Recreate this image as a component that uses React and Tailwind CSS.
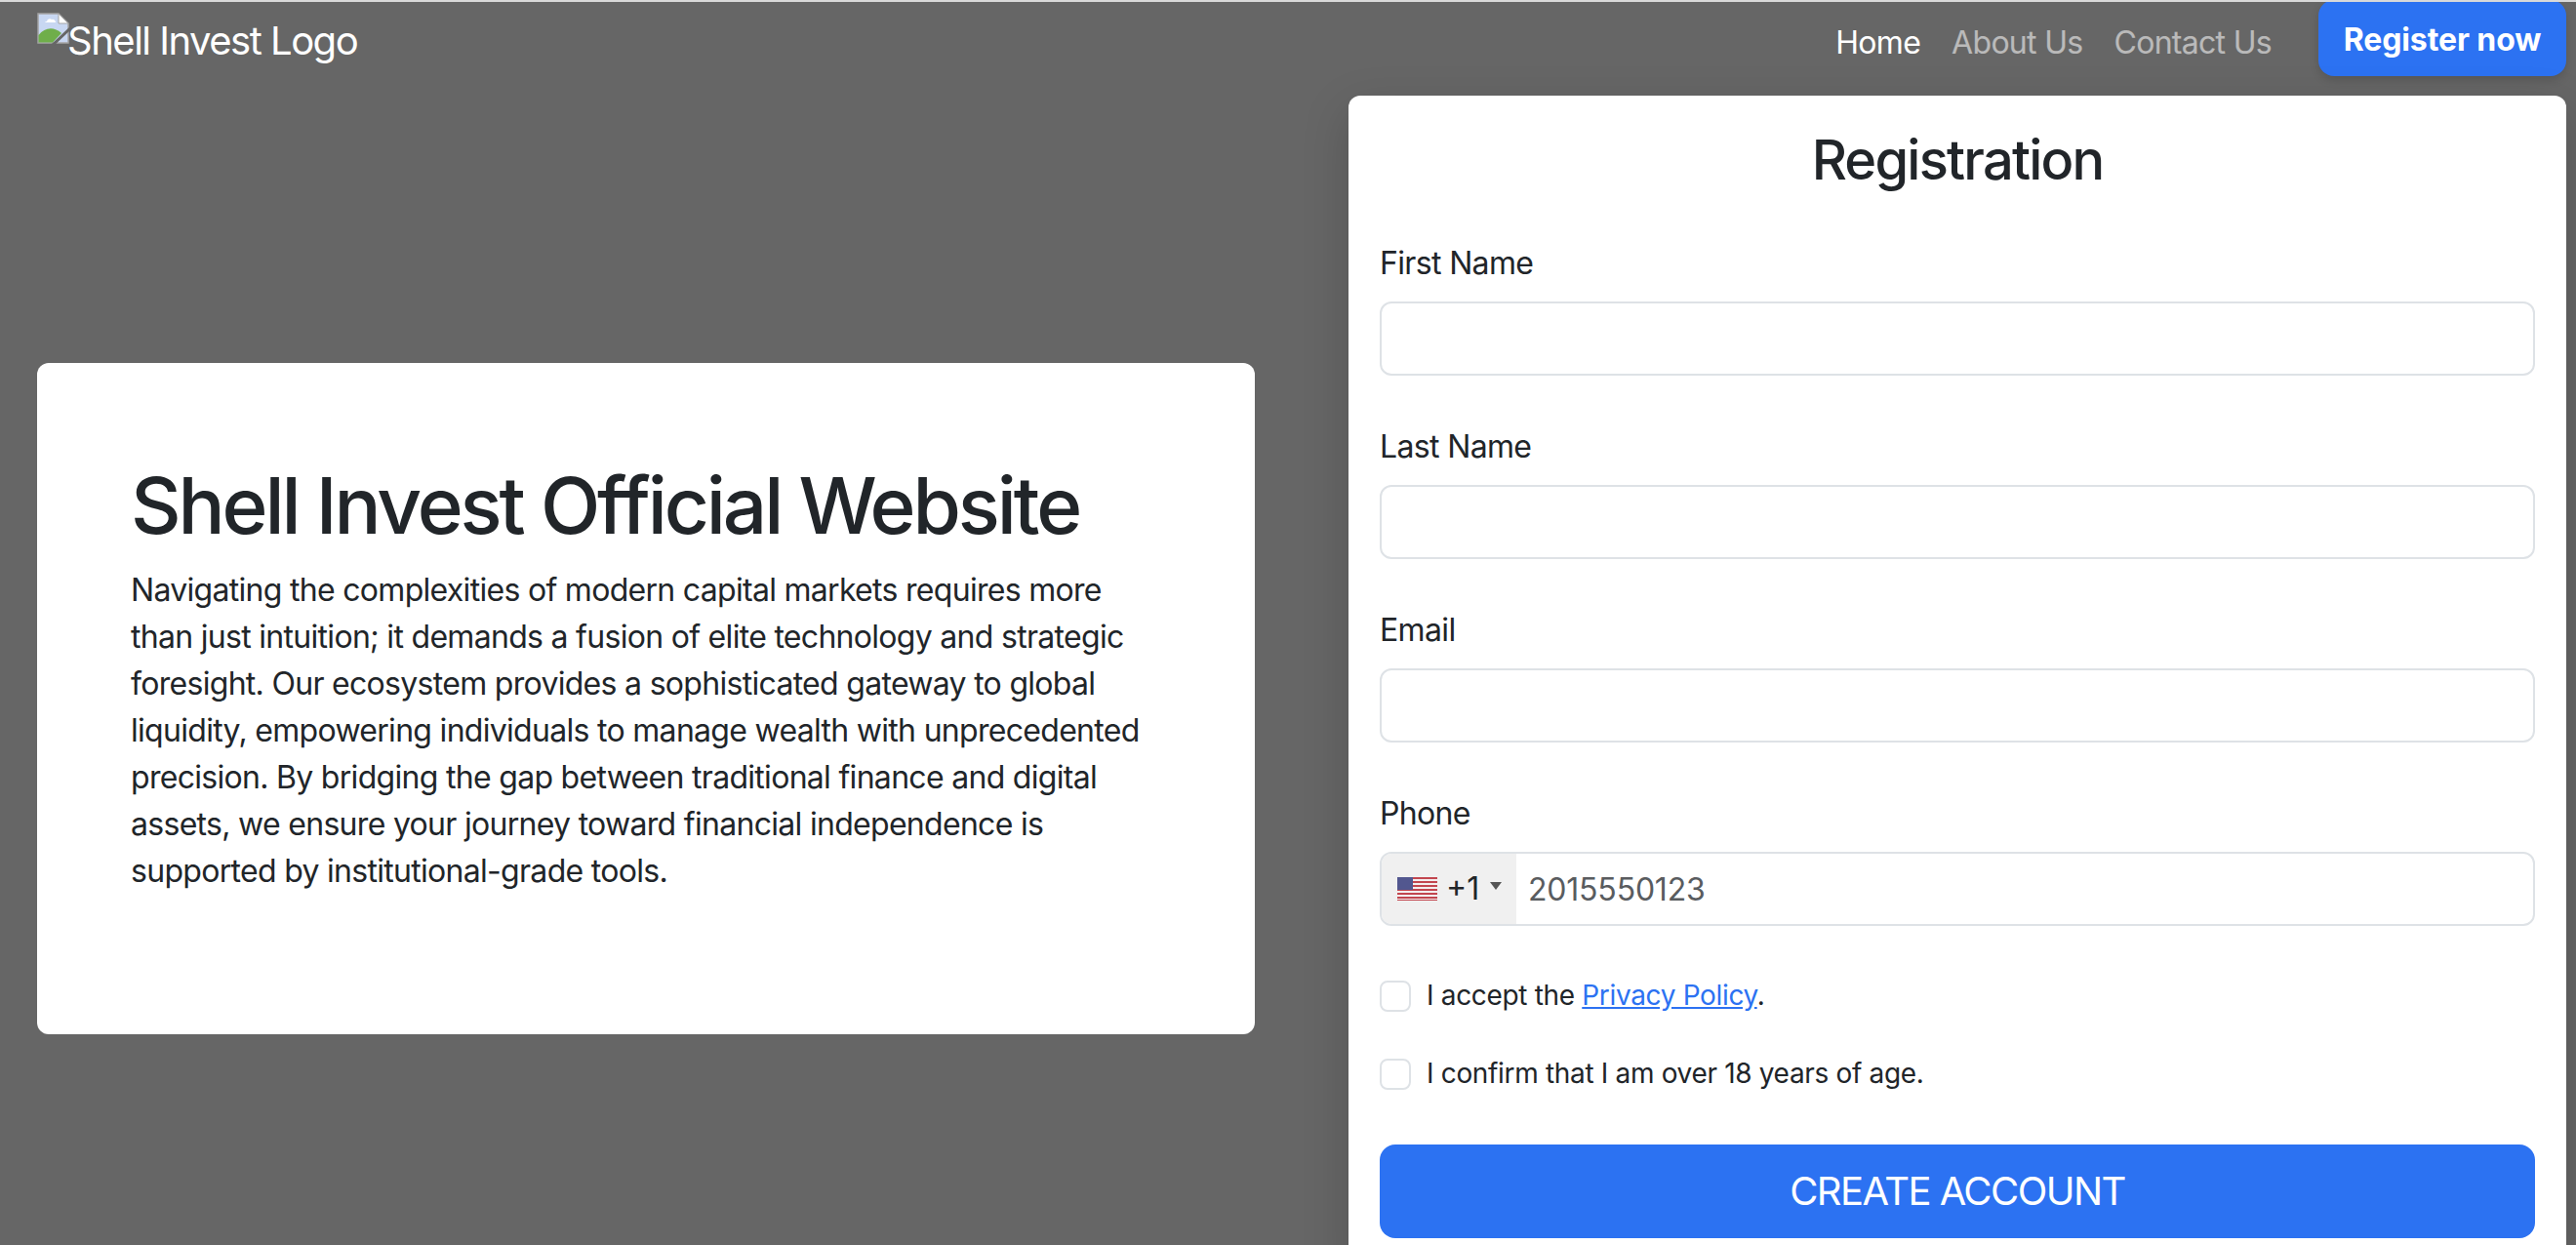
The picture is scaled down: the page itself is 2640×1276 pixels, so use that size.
export default function App() {
  const field = "block w-full h-[76px] rounded-[12px] border-2 border-[#dee2e6] bg-white";
  const labelCls = "block text-[32px] leading-[48px] mb-[15px] text-[#212529] tracking-[-0.65px]";
  return (
    <div className="h-screen overflow-hidden bg-[#666666] border-t-2 border-[#d9d9d9] font-['Inter','Liberation_Sans',sans-serif] text-[#212529]">
      <nav className="h-[96px] flex items-start justify-between pl-[38px] pr-[10px]">
        <div className="flex items-start pt-[10px]">
          <svg width="34" height="34" viewBox="0 0 34 34" className="shrink-0 mt-px">
            <path d="M1 1H22L32 11V31H1Z" fill="#c8d7f2" stroke="#a4a4a4" strokeWidth="1.5" />
            <path d="M22 1V11H32Z" fill="#fff" stroke="#a4a4a4" strokeWidth="1" />
            <path d="M10 9a3 3 0 0 1 5-2a3 3 0 0 1 4 3H8a2 2 0 0 1 2-1Z" fill="#fff" />
            <path d="M1.5 30.5V23C8 15 17 14 25 21L16 30.5Z" fill="#6fae4a" />
            <path d="M16 33L34 16" stroke="#666666" strokeWidth="3" />
          </svg>
          <span className="text-[40px] leading-[60px] text-white -ml-[3px] font-normal tracking-[-1.5px]">Shell Invest Logo</span>
        </div>
        <div className="flex items-start">
          <div className="flex text-[32px] leading-[48px] pt-[18px] mr-[48px] gap-[32px] tracking-[-0.7px]">
            <a className="text-white">Home</a>
            <a className="text-white/55">About Us</a>
            <a className="text-white/55">Contact Us</a>
          </div>
          <button className="-mt-[2px] w-[254px] h-[78px] rounded-[16px] bg-[#2c72f2] text-white text-[32px] font-bold leading-[48px] pt-[3px] tracking-[-0.1px] shadow-[0_4px_10px_rgba(0,0,0,0.15)]">Register now</button>
        </div>
      </nav>
      <main className="flex items-start pl-[38px] pr-[10px] gap-[96px]">
        <section className="w-[1248px] h-[688px] mt-[274px] bg-white rounded-[12px] pt-[98px] px-[96px]">
          <h1 className="text-[80px] leading-[96px] font-medium mb-[15px] tracking-[-3.1px]">Shell Invest Official Website</h1>
          <p className="text-[32px] leading-[48px] tracking-[-0.7px]">Navigating the complexities of modern capital markets requires more than just intuition; it demands a fusion of elite technology and strategic foresight. Our ecosystem provides a sophisticated gateway to global liquidity, empowering individuals to manage wealth with unprecedented precision. By bridging the gap between traditional finance and digital assets, we ensure your journey toward financial independence is supported by institutional-grade tools.</p>
        </section>
        <section className="w-[1248px] bg-white rounded-[12px] px-[32px] pt-[32px] pb-[32px] shadow-[0_16px_48px_rgba(0,0,0,0.18)]">
          <h2 className="text-[56px] leading-[68px] font-medium text-center mb-[48px] tracking-[-1.8px]">Registration</h2>
          <label className={labelCls}>First Name</label>
          <div className={field + " mb-[49px]"} />
          <label className={labelCls}>Last Name</label>
          <div className={field + " mb-[49px]"} />
          <label className={labelCls}>Email</label>
          <div className={field + " mb-[49px]"} />
          <label className={labelCls}>Phone</label>
          <div className={field + " flex overflow-hidden mb-[56px]"}>
            <div className="w-[138px] bg-[#f0f0f0] flex items-center pl-[16px] shrink-0">
              <svg width="41" height="24" viewBox="0 0 41 24" className="shrink-0">
                <rect width="41" height="24" fill="#f4eeee" />
                <path d="M0 1h41M0 5h41M0 9h41M0 13h41M0 17h41M0 21h41" stroke="#c2464f" strokeWidth="2" />
                <rect y="23" width="41" height="1" fill="#c2464f" />
                <rect width="16" height="13" fill="#52578f" />
              </svg>
              <span className="text-[32px] leading-[48px] ml-[9px] -mt-[1px]">+1</span>
              <span className="ml-[11px] -mt-[6px] w-0 h-0 border-x-[6px] border-x-transparent border-t-[8px] border-t-[#555555]" />
            </div>
            <span className="text-[32px] leading-[74px] text-[#595c5f] pl-[12px] tracking-[-0.2px]">2015550123</span>
          </div>
          <div className="flex items-center h-[32px] mb-[48px] text-[28px] leading-[42px] tracking-[-0.33px]">
            <span className="w-[32px] h-[32px] rounded-[8px] border-2 border-[#dee2e6] bg-white mr-[16px] shrink-0" />
            <span className="-mt-[3px]">I accept the <a className="text-[#2c72f2] underline">Privacy Policy</a>.</span>
          </div>
          <div className="flex items-center h-[32px] mb-[56px] text-[28px] leading-[42px] tracking-[-0.33px]">
            <span className="w-[32px] h-[32px] rounded-[8px] border-2 border-[#dee2e6] bg-white mr-[16px] shrink-0" />
            <span className="-mt-[3px]">I confirm that I am over 18 years of age.</span>
          </div>
          <button className="block w-full h-[96px] rounded-[16px] bg-[#2c72f2] text-white text-[40px] leading-[60px] tracking-[-1.55px]">CREATE ACCOUNT</button>
        </section>
      </main>
    </div>
  );
}
